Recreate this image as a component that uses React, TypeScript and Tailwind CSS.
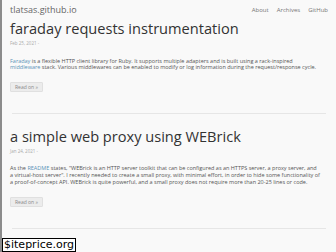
import type { ReactNode } from 'react'

interface Post {
  title: string
  date: string
  body: ReactNode
}

const NAV = ['About', 'Archives', 'GitHub']

const POSTS: Post[] = [
  {
    title: 'faraday requests instrumentation',
    date: 'Feb 25, 2021 -',
    body: (
      <>
        <a className="text-[#5b93b8]">Faraday</a> is a flexible HTTP client library for Ruby. It supports multiple
        adapters and is built using a rack-inspired
        <br />
        <a className="text-[#5b93b8]">middleware</a> stack. Various middlewares can be enabled to modify or log
        information during the request/response cycle.
      </>
    ),
  },
  {
    title: 'a simple web proxy using WEBrick',
    date: 'Jan 24, 2021 -',
    body: (
      <>
        As the <a className="text-[#5b93b8]">README</a> states, "WEBrick is an HTTP server toolkit that can be
        configured as an HTTPS server, a proxy server, and
        <br />
        a virtual-host server". I recently needed to create a small proxy, with minimal effort, in order to hide
        some functionality of
        <br />
        a proof-of-concept API. WEBrick is quite powerful, and a small proxy does not require more than 20-25 lines
        or code.
      </>
    ),
  },
]

function PostPreview({ post }: { post: Post }) {
  return (
    <article>
      <h2 className="pt-[1px] text-[14.6px] leading-[15px] text-[#333]">{post.title}</h2>
      <div className="mt-[5px] text-[4.5px] leading-none text-[#aaa]">{post.date}</div>
      <p className="mt-[12px] text-[5.5px] leading-[6.7px] text-[#555] whitespace-nowrap">{post.body}</p>
      <button className="mt-[7px] px-[4px] h-[10px] bg-[#ececec] border border-[#e0e0e0] rounded-[1px] text-[5px] leading-none text-[#888]">
        Read on »
      </button>
      <hr className="mt-[18px] mx-[2px] border-t border-[#e6e6e6]" />
    </article>
  )
}

export default function App() {
  return (
    <div className="relative w-[336px] h-[252px] overflow-hidden bg-[#f9f9f9] border-l-2 border-[#8c8c8c] font-['Open_Sans',sans-serif]">
      <header className="flex items-center justify-between pl-[8px] pr-[8px] pt-[5px]">
        <div className="text-[9px] leading-[10px] text-[#666]">tlatsas.github.io</div>
        <nav className="flex gap-[8px] text-[6px] text-[#777]">
          {NAV.map((n) => (
            <span key={n}>{n}</span>
          ))}
        </nav>
      </header>
      <main className="px-[8px] pt-[5px] flex flex-col gap-[14px]">
        {POSTS.map((p) => (
          <PostPreview key={p.title} post={p} />
        ))}
        <h2 className="mt-[7px] text-[14.6px] leading-[15px] text-[#333]">building a recent ready docker image</h2>
      </main>
      <div className="absolute left-0 bottom-0 h-[14px] px-[1px] bg-white border border-black text-[11px] leading-[12px] text-black font-['DejaVu_Sans',sans-serif]">
        $iteprice.org
      </div>
    </div>
  )
}
